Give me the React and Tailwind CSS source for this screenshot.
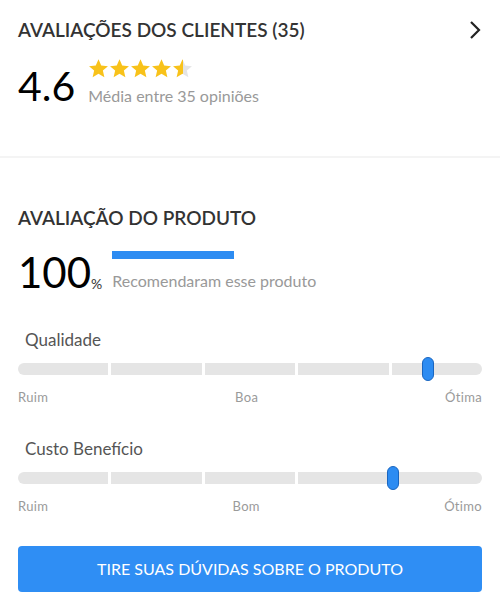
import React from 'react';

const Star = ({ fill = 1, id }) => (
  <svg width="21" height="21" viewBox="0 0 24 24">
    <defs>
      <linearGradient id={id}>
        <stop offset={`${fill * 100}%`} stopColor="#f8c21a" />
        <stop offset={`${fill * 100}%`} stopColor="#e4e4e4" />
      </linearGradient>
    </defs>
    <path
      d="M12 1.5l3.1 7.1 7.7.7-5.8 5.1 1.7 7.6L12 18l-6.7 4 1.7-7.6-5.8-5.1 7.7-.7z"
      fill={`url(#${id})`}
    />
  </svg>
);

const Scale = ({ label, pos, marks }) => (
  <div>
    <div className="pl-[7px] text-[17px] text-[#555] leading-none">{label}</div>
    <div className="relative mt-[15px] h-[12px] flex gap-[3px]">
      {[0, 1, 2, 3, 4].map(i => (
        <div
          key={i}
          className={
            'flex-1 bg-[#e5e5e5] ' +
            (i === 0 ? 'rounded-l-full' : i === 4 ? 'rounded-r-full' : '')
          }
        />
      ))}
      <div
        className="absolute top-[-6px] w-[12px] h-[24px] rounded-full bg-[#2d8cf2] border border-[#1a66c0]"
        style={{ left: pos }}
      />
    </div>
    <div className="mt-[16px] flex justify-between text-[13px] text-[#9a9a9a] leading-none tracking-wide">
      {marks.map(m => (
        <span key={m}>{m}</span>
      ))}
    </div>
  </div>
);

export default function App() {
  return (
    <div className="w-[500px] h-[613px] bg-white font-['Lato','Liberation_Sans',sans-serif] overflow-hidden">
      <div className="px-[18px] pt-[19px] h-[156px]">
        <div className="flex items-center justify-between">
          <h2 className="text-[19px] font-semibold text-[#333] leading-[22px]">
            AVALIAÇÕES DOS CLIENTES (35)
          </h2>
          <svg width="14" height="20" viewBox="0 0 14 20">
            <path d="M3 2l8 8-8 8" fill="none" stroke="#222" strokeWidth="2.2" />
          </svg>
        </div>
        <div className="mt-[17px] flex items-start">
          <div className="text-[41px] font-normal text-black leading-none mt-[7px]">4.6</div>
          <div className="ml-[13px]">
            <div className="flex">
              <Star id="s1" />
              <Star id="s2" />
              <Star id="s3" />
              <Star id="s4" />
              <Star id="s5" fill={0.55} />
            </div>
            <div className="mt-[9px] text-[16px] text-[#999] leading-none">Média entre 35 opiniões</div>
          </div>
        </div>
      </div>

      <div className="h-[2px] bg-[#f4f4f4]" />

      <div className="px-[18px] pt-[49px]">
        <h2 className="text-[19px] font-semibold text-[#333] leading-[22px]">AVALIAÇÃO DO PRODUTO</h2>
        <div className="mt-[22px] flex items-start">
          <div className="flex items-end">
            <span className="text-[42px] font-normal text-black leading-none">100</span>
            <span className="text-[14px] text-[#333] leading-none mb-[2px]">%</span>
          </div>
          <div className="ml-[10px]">
            <div className="w-[122px] h-[8px] bg-[#2d8cf2]" />
            <div className="mt-[14px] text-[16px] text-[#999] leading-none">Recomendaram esse produto</div>
          </div>
        </div>

        <div className="mt-[38px]">
          <Scale label="Qualidade" pos={404} marks={['Ruim', 'Boa', 'Ótima']} />
        </div>
        <div className="mt-[36px]">
          <Scale label="Custo Benefício" pos={369} marks={['Ruim', 'Bom', 'Ótimo']} />
        </div>

        <button className="mt-[33px] w-full h-[46px] rounded-[4px] bg-[#2f8ef4] text-white text-[16px]">
          TIRE SUAS DÚVIDAS SOBRE O PRODUTO
        </button>
      </div>
    </div>
  );
}
